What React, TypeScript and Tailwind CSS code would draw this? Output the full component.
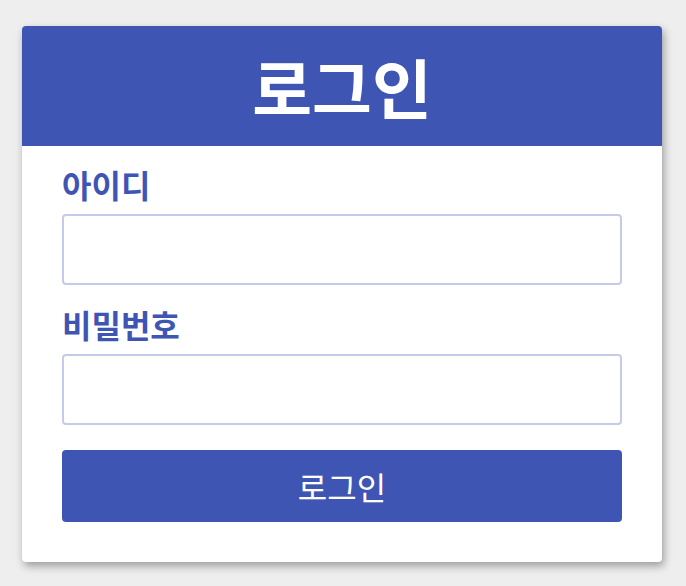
import React from "react";

export default function App() {
  return (
    <div
      className="min-h-[586px] bg-[#eeeeee] pt-[26px]"
      style={{ fontFamily: '"Noto Sans CJK KR", "Noto Sans", sans-serif' }}
    >
      <div className="ml-[22px] w-[640px] overflow-hidden rounded-[4px] bg-white shadow-[2px_4px_8px_rgba(0,0,0,0.35)]">
        {/* Header */}
        <div className="flex h-[120px] items-center justify-center bg-[#3f55b3]">
          <h1 className="text-[65px] font-bold leading-none text-white">로그인</h1>
        </div>

        {/* Form */}
        <form className="flex flex-col px-10 pt-[20px] pb-10" onSubmit={(e) => e.preventDefault()}>
          <label className="mb-3 text-[32px] font-bold leading-[36px] text-[#3f55b3]">아이디</label>
          <input
            type="text"
            className="h-[71px] w-full rounded-[4px] border-2 border-[#c5cae9] px-3 text-xl outline-none"
          />
          <label className="mt-[21px] mb-3 text-[32px] font-bold leading-[36px] text-[#3f55b3]">비밀번호</label>
          <input
            type="password"
            className="h-[71px] w-full rounded-[4px] border-2 border-[#c5cae9] px-3 text-xl outline-none"
          />
          <button
            type="submit"
            className="mt-[25px] h-[72px] w-full rounded-[4px] bg-[#3f55b3] text-[32px] text-white"
          >
            로그인
          </button>
        </form>
      </div>
    </div>
  );
}
